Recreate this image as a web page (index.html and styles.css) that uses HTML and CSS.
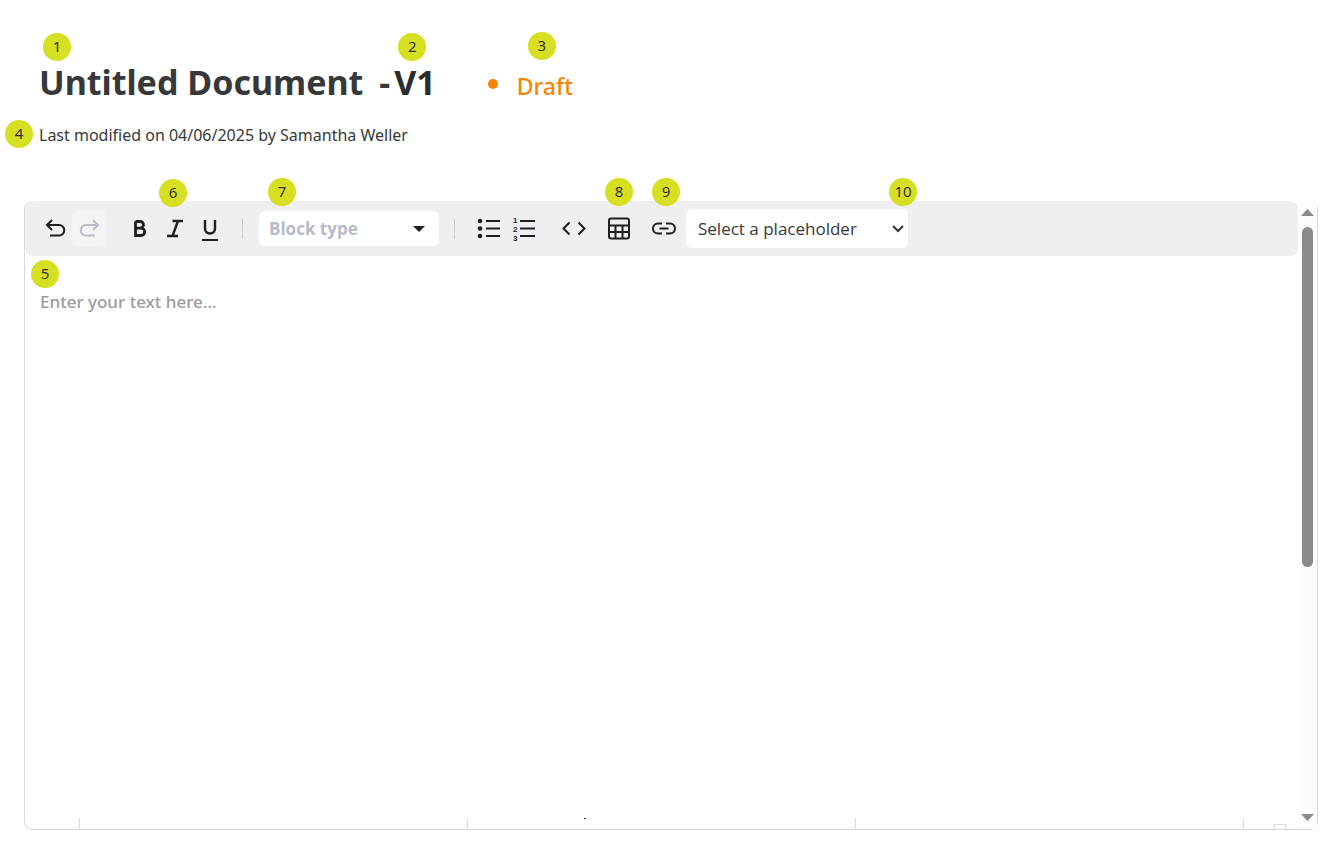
FILE: index.html
```
<!DOCTYPE html>
<html lang="en">
<head>
    <meta charset="UTF-8">
    <meta name="viewport" content="width=device-width, initial-scale=1.0">
    <title>Untitled Document</title>
    <link rel="stylesheet" href="styles.css">
</head>
<body>
    <header class="doc-header">
        <div class="title-row">
            <h1 class="marked">Untitled Document<span class="badge badge-title">1</span></h1>
            <span class="dash">-</span>
            <span class="version marked">V1<span class="badge badge-title">2</span></span>
            <span class="dot"></span>
            <span class="status marked">Draft<span class="badge badge-status">3</span></span>
        </div>
        <p class="modified marked">Last modified on 04/06/2025 by Samantha Weller<span class="badge badge-modified">4</span></p>
    </header>

    <main class="editor">
        <div class="editor-main">
            <div class="toolbar">
                <div class="group">
                    <button type="button" aria-label="Undo">
                        <svg width="24" height="24" viewBox="0 0 24 24"><path d="M9 3 4 8l5 5M4 8h12a5.200 5.200 0 0 1 0 10.500H7"/></svg>
                    </button>
                    <button type="button" aria-label="Redo" class="redo" disabled>
                        <svg width="24" height="24" viewBox="0 0 24 24"><path d="m15 3 5 5-5 5M20 8H8a5.200 5.200 0 0 0 0 10.500h9"/></svg>
                    </button>
                </div>
                <div class="group">
                    <button type="button" aria-label="Bold">
                        <svg width="24" height="24" viewBox="0 0 24 24"><path class="bold" d="M7.500 4.500v14h5.500a3.700 3.700 0 0 0 0-7.400h-5.500M7.500 4.500h4.700a3.300 3.300 0 0 1 0 6.600"/></svg>
                    </button>
                    <div class="marked">
                        <button type="button" aria-label="Italic">
                            <svg width="24" height="24" viewBox="0 0 24 24"><path class="thick" d="M9.500 4H20M4 19h11M15 4 9.500 19"/></svg>
                        </button>
                        <span class="badge badge-button badge-italic">6</span>
                    </div>
                    <button type="button" aria-label="Underline">
                        <svg width="24" height="26" viewBox="0 0 24 26"><path class="thick" d="M7 4v8.500a5 5 0 0 0 10 0V4"/><path d="M4 24h16"/></svg>
                    </button>
                </div>
                <span class="divider"></span>
                <div class="select-box block-type marked">
                    <select aria-label="Block type">
                        <option>Block type</option>
                        <option>Paragraph</option>
                        <option>Heading</option>
                    </select>
                    <svg class="caret" width="12" height="6" viewBox="0 0 12 6"><path d="M0 0h12L6 6z"/></svg>
                    <span class="badge badge-block">7</span>
                </div>
                <span class="divider"></span>
                <div class="group">
                    <button type="button" aria-label="Bulleted list">
                        <svg width="24" height="24" viewBox="0 0 24 24"><path d="M9 4h14M9 11.500h14M9 19h14"/><g class="solid"><circle cx="3" cy="4" r="2.300"/><circle cx="3" cy="11.500" r="2.300"/><circle cx="3" cy="19" r="2.300"/></g></svg>
                    </button>
                    <button type="button" aria-label="Numbered list">
                        <svg width="24" height="28" viewBox="0 0 24 28"><path d="M8 6h15M8 13.500h15M8 21h15"/><g class="digits"><text x="1" y="8">1</text><text x="1" y="17">2</text><text x="1" y="26">3</text></g></svg>
                    </button>
                </div>
                <button type="button" class="code" aria-label="Code">
                    <svg width="26" height="24" viewBox="0 0 26 24"><path d="M8.500 5.500 2.500 11.500l6 6M17.500 5.500l6 6-6 6"/></svg>
                </button>
                <div class="marked table">
                    <button type="button" aria-label="Table">
                        <svg width="24" height="24" viewBox="0 0 24 24"><rect x="2" y="1.500" width="20" height="20" rx="2"/><path d="M2 8.500h20M2 15h20M8.500 8.500v13M15.500 8.500v13"/></svg>
                    </button>
                    <span class="badge badge-button">8</span>
                </div>
                <div class="marked link">
                    <button type="button" aria-label="Link">
                        <svg width="26" height="24" viewBox="0 0 26 24"><path d="M11 6.500H7a5 5 0 0 0 0 10H11M15 6.500h4a5 5 0 0 1 0 10H15M8.500 11.500h9"/></svg>
                    </button>
                    <span class="badge badge-button badge-link">9</span>
                </div>
                <div class="select-box placeholder marked">
                    <select aria-label="Placeholder">
                        <option>Select a placeholder</option>
                    </select>
                    <svg class="chevron" width="12" height="8" viewBox="0 0 12 8"><path d="m1 1 5 5 5-5"/></svg>
                    <span class="badge badge-placeholder">10</span>
                </div>
            </div>
            <div class="writing marked">
                <textarea aria-label="Document text" placeholder="Enter your text here..."></textarea>
                <span class="badge badge-text">5</span>
            </div>
            <!-- top edge of the footer table, cut off by the editor -->
            <div class="footer-row">
                <span></span>
                <span></span>
                <span class="cell-text"></span>
                <span></span>
                <span class="cell-handle"></span>
            </div>
        </div>
        <div class="scrollbar">
            <svg width="13" height="7" viewBox="0 0 13 7"><path d="M0 7h13L6.500 0z"/></svg>
            <div class="track"><div class="thumb"></div></div>
            <svg width="13" height="7" viewBox="0 0 13 7"><path d="M0 0h13L6.500 7z"/></svg>
        </div>
    </main>
</body>
</html>
```
FILE: styles.css
```
* {
    box-sizing: border-box;
}
body {
    display: flex;
    flex-direction: column;
    min-height: 100vh;
    margin: 0;
    padding: 56px 19px 12px 24px;
    background: #fff;
    color: #37383a;
    font-family: "Noto Sans", sans-serif;
}
h1, p {
    margin: 0;
}
.doc-header {
    padding-left: 15px;
    height: 145px;
}
.title-row {
    display: flex;
    align-items: baseline;
    font-size: 34px;
    line-height: 52px;
    font-weight: bold;
    white-space: nowrap;
}
h1 {
    font-size: 34px;
}
.dash {
    margin-left: 16px;
}
.version {
    margin-left: 4px;
    color: #2b2c2f;
}
.dot {
    width: 10px;
    height: 10px;
    align-self: center;
    margin: 4px 19px 0 52px;
    border-radius: 50%;
    background: #f98404;
}
.status {
    color: #f98404;
    font-size: 23px;
    font-weight: 500;
    line-height: 32px;
}
.modified {
    display: inline-block;
    margin-top: 15px;
    font-size: 16px;
    line-height: 24px;
}

/* numbered markers */
.marked {
    position: relative;
}
.badge {
    position: absolute;
    width: 28px;
    height: 28px;
    border-radius: 50%;
    background: #d6df21;
    color: #333;
    font-size: 15px;
    font-weight: normal;
    line-height: 27px;
    text-align: center;
}
.badge-title {
    left: 4px;
    top: -23px;
}
.badge-status {
    left: 11px;
    top: -38px;
}
.badge-modified {
    left: -34px;
    top: -3px;
}
.badge-button {
    left: 4px;
    top: -33px;
}
.badge-italic {
    left: 2px;
    top: -32px;
}
.badge-link {
    left: 6px;
}
.badge-block {
    left: 9px;
    top: -33px;
}
.badge-placeholder {
    right: -9px;
    top: -31px;
}
.badge-text {
    left: 6px;
    top: 4px;
}

/* editor */
.editor {
    display: flex;
    flex: 1;
    border: 1px solid #d9d9d9;
    border-top: none;
    border-radius: 8px;
}
.editor-main {
    display: flex;
    flex-direction: column;
    flex: 1;
    min-width: 0;
}
.toolbar {
    display: flex;
    align-items: center;
    height: 55px;
    padding-left: 12px;
    border-radius: 8px;
    background: #efeff1;
}
.group {
    display: flex;
    margin-right: 15px;
}
button {
    display: flex;
    align-items: center;
    justify-content: center;
    width: 35px;
    height: 35px;
    padding: 0;
    border: none;
    border-radius: 5px;
    background: none;
    color: #1c1e21;
    cursor: pointer;
}
button svg {
    fill: none;
    stroke: currentColor;
    stroke-width: 2;
}
button .thick {
    stroke-width: 2.4;
}
button .bold {
    stroke-width: 2.8;
}
button .solid, .digits {
    fill: currentColor;
    stroke: none;
}
.digits {
    font-family: "Liberation Sans", sans-serif;
    font-size: 8px;
    font-weight: bold;
}
.redo {
    background: #f4f4f5;
    color: #bbbdca;
}
.code, .table {
    margin-right: 10px;
}
.link {
    margin-right: 5px;
}
.divider {
    width: 1px;
    height: 20px;
    margin-right: 16px;
    background: #c9cad0;
}
select {
    width: 100%;
    height: 100%;
    padding: 0 10px;
    border: none;
    border-radius: 6px;
    background: #fff;
    font-family: "Open Sans", sans-serif;
    font-size: 17px;
    appearance: none;
}
.block-type {
    width: 180px;
    height: 35px;
    margin-right: 15px;
}
.block-type select {
    color: #b7bac8;
    font-weight: bold;
}
.placeholder {
    width: 222px;
    height: 39px;
}
.placeholder select {
    padding: 0 12px;
    color: #37383a;
}
.caret, .chevron {
    position: absolute;
    pointer-events: none;
}
.caret {
    right: 14px;
    top: 15px;
    fill: #1c1e21;
}
.chevron {
    right: 4px;
    top: 16px;
    fill: none;
    stroke: #333;
    stroke-width: 2;
}
.writing {
    display: flex;
    flex: 1;
}
textarea {
    flex: 1;
    padding: 34px 15px 15px;
    border: none;
    outline: none;
    resize: none;
    background: none;
    color: #37383a;
    font-family: inherit;
    font-size: 17px;
    font-weight: 500;
    line-height: 24px;
}
textarea::placeholder {
    color: #9b9b9b;
}
.footer-row {
    display: grid;
    grid-template-columns: 54px 1fr 1fr 1fr 55px;
    height: 11px;
}
.footer-row span + span {
    border-left: 1px solid #d9d9d9;
}
.cell-text::before {
    content: "";
    display: block;
    width: 2px;
    height: 1px;
    margin-left: 30%;
    background: #333;
}
.cell-handle::before {
    content: "";
    display: block;
    width: 10px;
    height: 5px;
    margin: 6px 0 0 30px;
    border: 1px solid #d9d9d9;
    border-bottom: none;
}
.scrollbar {
    display: flex;
    flex-direction: column;
    align-items: center;
    width: 19px;
    padding: 8px 0;
    background: #fcfcfc;
}
.scrollbar svg {
    fill: #8b8b8b;
}
.track {
    flex: 1;
    padding: 11px 0;
}
.thumb {
    width: 11px;
    height: 59%;
    border-radius: 6px;
    background: #8b8b8b;
}
```
